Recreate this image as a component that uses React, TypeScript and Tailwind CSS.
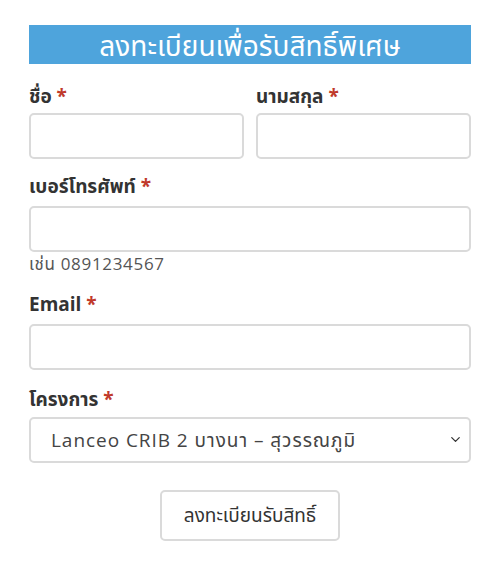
import { ChevronDown } from 'lucide-react';

const font = { fontFamily: '"Open Sans", "Noto Sans", "Noto Sans Thai", "DejaVu Sans", sans-serif' };

function Label({ text }: { text: string }) {
  return (
    <label className="block text-[19px] font-bold text-[#333] leading-[24px]">
      {text} <span className="text-[#c0392b]">*</span>
    </label>
  );
}

const inputCls = 'block w-full h-[46px] rounded-[5px] border-2 border-[#dadada] bg-white px-3 outline-none';

export default function App() {
  return (
    <div className="w-[500px] h-[563px] bg-white" style={font}>
      <div className="px-[29px] pt-[25px]">
        <div className="h-[39px] bg-[#4ea4dc] flex items-center justify-center text-white text-[28px] leading-none">
          ลงทะเบียนเพื่อรับสิทธิ์พิเศษ
        </div>

        <div className="mt-[20px] grid grid-cols-2 gap-x-3">
          <div>
            <Label text="ชื่อ" />
            <input className={`${inputCls} mt-[5px]`} />
          </div>
          <div>
            <Label text="นามสกุล" />
            <input className={`${inputCls} mt-[5px]`} />
          </div>
        </div>

        <div className="mt-[15px]">
          <Label text="เบอร์โทรศัพท์" />
          <input className={`${inputCls} mt-[8px]`} />
          <div className="text-[17px] tracking-[0.04em] text-[#555] leading-[24px]">เช่น 0891234567</div>
        </div>

        <div className="mt-[16px]">
          <Label text="Email" />
          <input className={`${inputCls} mt-[8px]`} />
        </div>

        <div className="mt-[17px]">
          <Label text="โครงการ" />
          <div className="relative mt-[6px]">
            <div className={`${inputCls} flex items-center pl-[20px] text-[19px] tracking-[0.05em] text-[#444]`}>
              Lanceo CRIB 2 บางนา – สุวรรณภูมิ
            </div>
            <ChevronDown size={15} strokeWidth={2} className="absolute right-[8px] top-[15px] text-[#333]" />
          </div>
        </div>

        <div className="mt-[27px] flex justify-center">
          <button className="h-[51px] w-[180px] rounded-[5px] border-2 border-[#dadada] bg-white text-[19px] text-[#333]">
            ลงทะเบียนรับสิทธิ์
          </button>
        </div>
      </div>
    </div>
  );
}
